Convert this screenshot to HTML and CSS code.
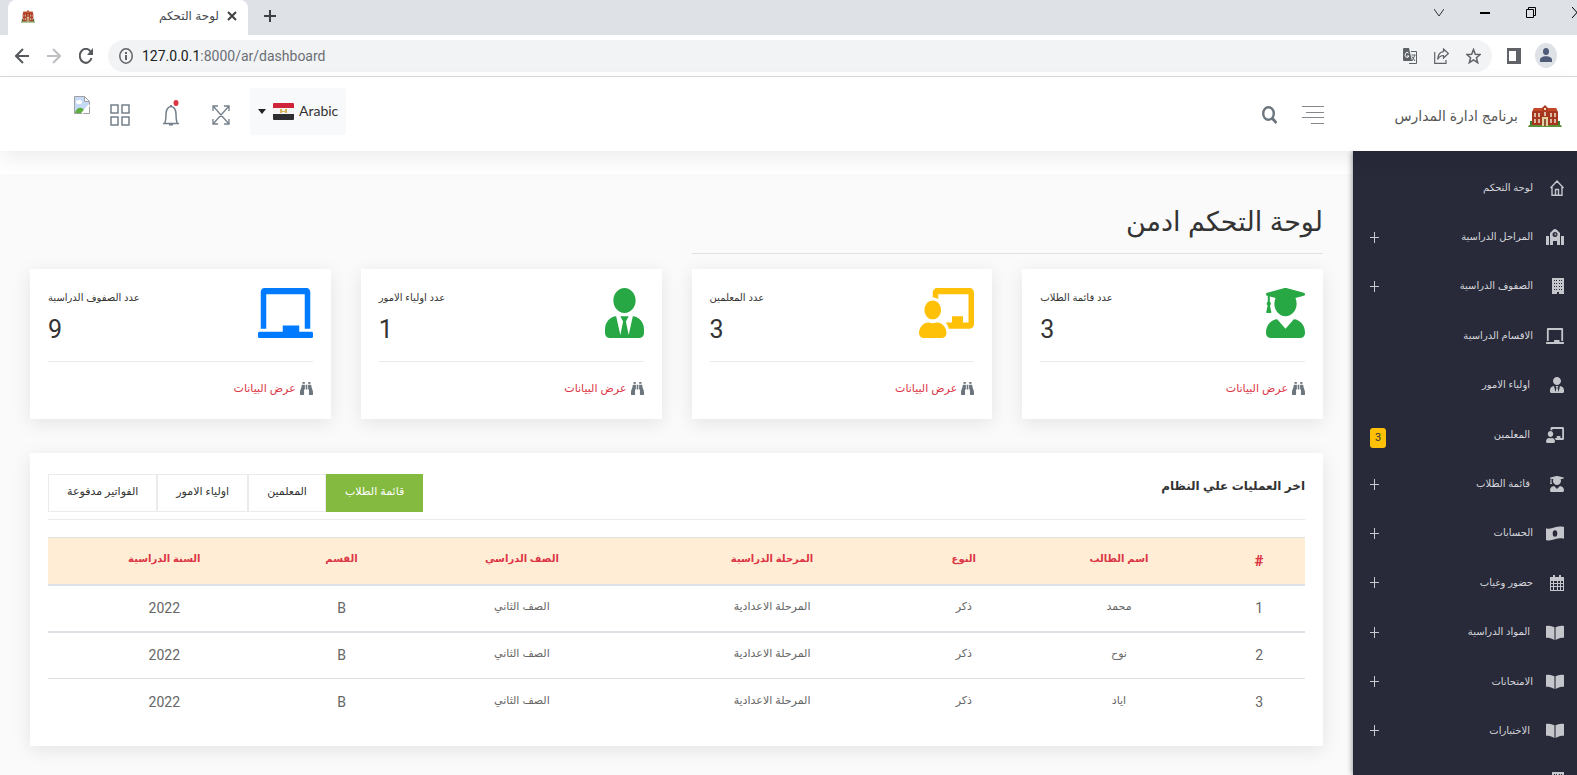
FILE: index.html
```html
<!DOCTYPE html>
<html lang="ar" dir="rtl">
<head>
<meta charset="utf-8">
<title>لوحة التحكم</title>
<link rel="stylesheet" href="styles.css">
</head>
<body>
<svg class="defs" aria-hidden="true">
  <symbol id="school" viewBox="0 0 34 23" preserveAspectRatio="none">
    <path d="M1 20h32l1 2H0z" fill="#5f8f3a"/>
    <path d="M2 16h3v4H2zM29 16h3v4h-3z" fill="#3f7d34"/>
    <path d="M4 7l2-4h8l3-3 3 3h8l2 4v13H4z" fill="#a5371f"/>
    <path d="M6 3h8v3H5zM20 3h8l1 3h-9z" fill="#c4472a"/>
    <path d="M14 4l3-3 3 3v3h-6z" fill="#b03a20"/>
    <path d="M16 3h2v2h-2z" fill="#f3e3c4"/>
    <path d="M6 8h2v4H6zM10 8h2v4h-2zM22 8h2v4h-2zM26 8h2v4h-2zM6 14h2v4H6zM10 14h2v4h-2zM22 14h2v4h-2zM26 14h2v4h-2zM16 7h2v4h-2z" fill="#dcb8a4"/>
    <path d="M14 12h6v9h-6z" fill="#e3cfa6"/>
    <path d="M16 14h2v7h-2z" fill="#8b5a35"/>
  </symbol>
  <symbol id="graduate" viewBox="0 0 448 512" preserveAspectRatio="none"><path fill="currentColor" d="M319.400 320.600L224 416l-95.400-95.400C57.100 323.700 0 382.200 0 454.400v9.600c0 26.500 21.500 48 48 48h352c26.500 0 48-21.500 48-48v-9.600c0-72.200-57.100-130.700-128.600-133.800zM13.600 79.800l6.400 1.500v58.400c-7 4.200-12 11.500-12 20.300 0 8.400 4.600 15.400 11.100 19.700L3.500 242c-1.700 6.900 2.100 14 7.600 14h41.800c5.500 0 9.300-7.100 7.600-14l-15.600-62.300C51.400 175.400 56 168.400 56 160c0-8.800-5-16.100-12-20.300V87.100l66 15.900c-8.600 17.200-14 36.400-14 57 0 70.700 57.300 128 128 128s128-57.300 128-128c0-20.600-5.300-39.800-14-57l96.300-23.200c18.200-4.400 18.200-27.100 0-31.500l-190.400-46c-13-3.100-26.700-3.100-39.700 0L13.600 48.200c-18.100 4.400-18.100 27.200 0 31.600z"/></symbol>
  <symbol id="tie" viewBox="0 0 448 512" preserveAspectRatio="none"><path fill="currentColor" d="M224 256c70.700 0 128-57.300 128-128S294.700 0 224 0 96 57.300 96 128s57.300 128 128 128zm95.800 32.600L272 480l-32-136 32-56h-96l32 56-32 136-47.800-191.400C56.900 292 0 350.300 0 422.400V464c0 26.500 21.500 48 48 48h352c26.500 0 48-21.500 48-48v-41.600c0-72.100-56.900-130.400-128.200-133.800z"/></symbol>
  <symbol id="teacher" viewBox="0 0 640 512" preserveAspectRatio="none"><path fill="currentColor" d="M208 352c-2.400 0-4.800.4-7.100 1.100C188 357.300 174.400 360 160 360s-27.900-2.700-40.900-6.900c-2.300-.7-4.700-1.100-7.100-1.100C49.900 352-.3 402.500 0 464.600.1 490.900 21.700 512 48 512h224c26.300 0 47.900-21.100 48-47.400.3-62.100-49.900-112.600-112-112.600zm-48-32c53 0 96-43 96-96s-43-96-96-96-96 43-96 96 43 96 96 96zM592 0H208c-26.500 0-48 22.300-48 49.600V96c23.400 0 45.100 6.800 64 17.800V64h352v288h-64v-64H384v64h-76.200c19.100 16.700 33.100 38.700 39.300 64H592c26.500 0 48-22.300 48-49.600V49.600C640 22.300 618.500 0 592 0z"/></symbol>
  <symbol id="board" viewBox="0 0 640 512" preserveAspectRatio="none"><path fill="currentColor" d="M96 64h448v352h64V40c0-22.100-17.900-40-40-40H72C49.900 0 32 17.900 32 40v376h64V64zm528 384H480v-64H288v64H16c-8.800 0-16 7.200-16 16v32c0 8.800 7.200 16 16 16h608c8.800 0 16-7.200 16-16v-32c0-8.800-7.200-16-16-16z"/></symbol>
  <symbol id="binoculars" viewBox="0 0 512 512" preserveAspectRatio="none"><path fill="currentColor" d="M416 48c0-8.800-7.200-16-16-16h-64c-8.800 0-16 7.200-16 16v48h96V48zM63.900 159.900C61.400 253.800 3.500 274.200 0 404v44c0 17.700 14.300 32 32 32h96c17.700 0 32-14.300 32-32V288h32V128H95.800c-17.600 0-31.500 14.300-31.900 31.900zm384.200 0c-.4-17.600-14.300-31.900-31.900-31.900H320v160h32v160c0 17.700 14.300 32 32 32h96c17.700 0 32-14.300 32-32v-44c-3.500-129.800-61.400-150.200-63.900-244.100zM176 32h-64c-8.800 0-16 7.200-16 16v48h96V48c0-8.800-7.200-16-16-16zm48 256h64V128h-64v160z"/></symbol>
  <symbol id="home" viewBox="0 0 14 16" preserveAspectRatio="none"><path fill="none" stroke="currentColor" stroke-width="1.400" d="M.5 8L7 1l6.500 7M2 6.500v8.800h10V6.500M5.500 15V9.500h3V15"/></symbol>
  <symbol id="building-school" viewBox="0 0 18 16" preserveAspectRatio="none"><path fill="currentColor" fill-rule="evenodd" d="M0 7h3v9H0zM15 7h3v9h-3zM4 4l3-3q2-2 4 0l3 3v12h-3v-4H7v4H4zM9 3a2.500 2.500 0 1 0 0 5 2.500 2.500 0 0 0 0-5zM8.700 4h.8v1.500h1v.7H8.700z"/></symbol>
  <symbol id="building" viewBox="0 0 12 16" preserveAspectRatio="none"><path fill="currentColor" fill-rule="evenodd" d="M0 0h12v16H7v-2H5v2H0zM2 2v1h1V2zM4 2v1h1V2zM7 2v1h1V2zM9 2v1h1V2zM2 5v1h1V5zM4 5v1h1V5zM7 5v1h1V5zM9 5v1h1V5zM2 8v1h1V8zM4 8v1h1V8zM7 8v1h1V8zM9 8v1h1V8zM2 11v1h1v-1zM4 11v1h1v-1zM7 11v1h1v-1zM9 11v1h1v-1z"/></symbol>
  <symbol id="money" viewBox="0 0 18 14" preserveAspectRatio="none"><path fill="currentColor" fill-rule="evenodd" d="M0 2c6 2 10-3 18-1v11c-7-2-12 3-18 1zM9 4a2.300 3 0 1 0 0 6 2.300 3 0 0 0 0-6z"/></symbol>
  <symbol id="calendar" viewBox="0 0 14 16" preserveAspectRatio="none"><path fill="currentColor" fill-rule="evenodd" d="M3 0h2v2h4V0h2v2h3v14H0V2h3zM1 6v2h2V6zM4 6v2h3V6zM8 6v2h2V6zM11 6v2h2V6zM1 9v2h2V9zM4 9v2h3V9zM8 9v2h2V9zM11 9v2h2V9zM1 12v3h2v-3zM4 12v3h3v-3zM8 12v3h2v-3zM11 12v3h2v-3z"/></symbol>
  <symbol id="book" viewBox="0 0 16 14" preserveAspectRatio="none"><path fill="currentColor" d="M0 1c3-1 5 0 7.500 1v12C5 12.500 3 12 0 12zM16 1c-3-1-5 0-7.500 1v12c2.500-1.500 4.500-2 7.500-2z"/></symbol>
</svg>

<div class="browser" dir="ltr">
  <div class="tabstrip">
    <div class="tab">
      <svg class="favicon"><use href="#school"/></svg>
      <span class="tab-title" dir="rtl">لوحة التحكم</span>
      <button class="chrome-btn" aria-label="Close tab"><svg width="10" height="10" viewBox="0 0 10 10"><path d="M1 1l8 8M9 1l-8 8" stroke="#3c4043" stroke-width="2"/></svg></button>
    </div>
    <button class="chrome-btn" aria-label="New tab"><svg width="14" height="14" viewBox="0 0 14 14"><path d="M7 1v12M1 7h12" stroke="#3c4043" stroke-width="2"/></svg></button>
    <div class="window-controls">
      <button class="chrome-btn" aria-label="Tab search"><svg width="10" height="8" viewBox="0 0 10 8"><path d="M0 0l5 7 5-7" fill="none" stroke="#333"/></svg></button>
      <button class="chrome-btn" aria-label="Minimize"><svg width="10" height="10" viewBox="0 0 10 10"><path d="M0 5h10" stroke="#000" stroke-width="2"/></svg></button>
      <button class="chrome-btn" aria-label="Restore"><svg width="10" height="11" viewBox="0 0 10 11"><path d="M.5 2.500h7v8h-7zM2.500 2V.5h7v8H8" fill="none" stroke="#000"/></svg></button>
      <button class="chrome-btn" aria-label="Close"><svg width="10" height="11" viewBox="0 0 10 11"><path d="M0 0l10 11M10 0L0 11" stroke="#000"/></svg></button>
    </div>
  </div>
  <div class="toolbar">
    <button class="chrome-btn" aria-label="Back"><svg width="14" height="16" viewBox="0 0 14 16"><path d="M14 8H1M8 1L1 8l7 7" fill="none" stroke="#55585c" stroke-width="2"/></svg></button>
    <button class="chrome-btn" aria-label="Forward"><svg width="14" height="16" viewBox="0 0 14 16"><path d="M0 8h13M6 1l7 7-7 7" fill="none" stroke="#bdbfc2" stroke-width="2"/></svg></button>
    <button class="chrome-btn" aria-label="Reload"><svg width="14" height="16" viewBox="0 0 14 16"><path d="M12.500 10A6 7 0 1 1 11.500 3.500" fill="none" stroke="#55585c" stroke-width="2"/><path d="M14 0v7H8z" fill="#55585c"/></svg></button>
    <div class="omnibox">
      <svg width="14" height="16" viewBox="0 0 14 16" preserveAspectRatio="none"><ellipse cx="7" cy="8" rx="6.200" ry="7.200" fill="none" stroke="#5f6368" stroke-width="1.500"/><path d="M7 7v5M7 4v2" stroke="#5f6368" stroke-width="2"/></svg>
      <span class="url"><b>127.0.0.1</b>:8000/ar/dashboard</span>
      <button class="chrome-btn" aria-label="Translate"><svg width="14" height="16" viewBox="0 0 14 16"><path d="M0 1a1 1 0 0 1 1-1h5l3 13H1a1 1 0 0 1-1-1z" fill="#5f6368"/><path d="M8 3.500h5.500v12H6" fill="none" stroke="#5f6368"/><path d="M5.500 5A2 2.500 0 1 0 6 8H4" fill="none" stroke="#fff"/><path d="M8.500 7h4M12 7l-3 6M9 8.500l3 4.500" stroke="#5f6368"/></svg></button>
      <button class="chrome-btn" aria-label="Share"><svg width="15" height="16" viewBox="0 0 15 16"><path d="M.7 4v11.300H12V12M9.500 1l4.800 4.500-4.800 4.500V7.500C6.500 7.500 5 9 3.700 11.500 4 7 6 4 9.500 3.700z" fill="none" stroke="#5f6368" stroke-width="1.200"/></svg></button>
      <button class="chrome-btn" aria-label="Bookmark"><svg width="15" height="16" viewBox="0 0 15 16"><path d="M7.500 1.500l1.800 4.700 4.900.3-3.800 3.200 1.300 5-4.200-2.800-4.200 2.800 1.300-5L.8 6.500l4.900-.3z" fill="none" stroke="#5f6368" stroke-width="1.500"/></svg></button>
    </div>
    <button class="chrome-btn" aria-label="Side panel"><svg width="14" height="16" viewBox="0 0 14 16"><path d="M0 0h14v16H0zM2 3v10h7V3z" fill="#5f6368" fill-rule="evenodd"/></svg></button>
    <button class="chrome-btn avatar" aria-label="Profile"><svg width="22" height="25" viewBox="0 0 22 25"><ellipse cx="11" cy="12.500" rx="11" ry="12.500" fill="#dee1e6"/><ellipse cx="11" cy="8.500" rx="3" ry="3.500" fill="#4f5b78"/><path d="M5 19v-2c0-5 12-5 12 0v2z" fill="#4f5b78"/></svg></button>
  </div>
</div>

<header class="header">
  <a class="brand" href="#"><svg class="brand-logo"><use href="#school"/></svg><span>برنامج ادارة المدارس</span></a>
  <button class="plain menu-toggle" aria-label="القائمة"><svg width="22" height="20" viewBox="0 0 22 20"><path d="M0 1.500h22M4 7.500h18M0 12.500h22M9 18.500h13" stroke="#84898e" stroke-width="1"/></svg></button>
  <button class="plain" aria-label="بحث"><svg width="15" height="18" viewBox="0 0 15 18" preserveAspectRatio="none"><ellipse cx="6.500" cy="7.500" rx="5.300" ry="6.300" fill="none" stroke="#6c757d" stroke-width="2.400"/><path d="M10 12l4.500 5" stroke="#6c757d" stroke-width="2.800"/></svg></button>
  <div class="tools">
    <button class="language"><span>Arabic</span><svg width="21" height="17" viewBox="0 0 21 17"><rect width="21" height="17" rx="1" fill="#f4f4f4"/><path d="M0 5V1q0-1 1-1h19q1 0 1 1v4z" fill="#ce2338"/><path d="M0 11h21v5q0 1-1 1H1q-1 0-1-1z" fill="#2e2e30"/><path d="M7 6h2v4H7zM12 6h2v4h-2zM9 8h3v1H9z" fill="#d7b25a"/></svg><i class="caret"></i></button>
    <button class="plain" aria-label="ملء الشاشة"><svg width="18" height="20" viewBox="0 0 18 20"><path d="M1 1l16 18M17 1L1 19M1 6V1h5M12 1h5v5M17 14v5h-5M6 19H1v-5" fill="none" stroke="#75808a" stroke-width="1.300"/></svg></button>
    <button class="plain bell" aria-label="الإشعارات"><svg width="18" height="26" viewBox="0 0 18 26"><path d="M1 23.500h16M3 23c1-3 1-6 1-9 0-4 2-7.500 5-7.500s5 3.500 5 7.500c0 3 0 6 1 9" fill="none" stroke="#75808a" stroke-width="1.500"/><path d="M7 24h4v1.500H7zM8 5h2v2H8z" fill="#75808a"/><ellipse cx="14" cy="3" rx="2.500" ry="3" fill="#dc3545"/></svg></button>
    <button class="plain" aria-label="التطبيقات"><svg width="20" height="22" viewBox="0 0 20 22"><path d="M1 1h7v8H1zM12 1h7v8h-7zM1 13h7v8H1zM12 13h7v8h-7z" fill="none" stroke="#75808a" stroke-width="1.500"/></svg></button>
    <a class="user" href="#" aria-label="الملف الشخصي"><svg width="16" height="18" viewBox="0 0 16 18"><path d="M.5.5h10l5 5v12H.5z" fill="#c6d9f7" stroke="#a0a0a0"/><ellipse cx="5" cy="6" rx="3" ry="2" fill="#fff"/><path d="M1 17c1-5 6-7 9-3v3z" fill="#5cae3d"/><path d="M9 17l6-7v7z" fill="#fff"/><path d="M8 17.500L15.500 9" stroke="#fff" stroke-width="2"/><path d="M10.500.5v5h5z" fill="#fff" stroke="#a0a0a0"/></svg></a>
  </div>
</header>

<div class="layout">
  <nav class="sidebar">
    <ul class="menu">
      <li><a href="#"><svg class="narrow"><use href="#home"/></svg><span>لوحة التحكم</span></a></li>
      <li><a href="#"><svg><use href="#building-school"/></svg><span>المراحل الدراسية</span><i class="plus"></i></a></li>
      <li><a href="#"><svg class="slim"><use href="#building"/></svg><span>الصفوف الدراسية</span><i class="plus"></i></a></li>
      <li><a href="#"><svg><use href="#board"/></svg><span>الاقسام الدراسية</span></a></li>
      <li><a href="#"><svg class="narrow"><use href="#tie"/></svg><span class="inset">اولياء الامور</span></a></li>
      <li><a href="#"><svg><use href="#teacher"/></svg><span class="inset">المعلمين</span><b class="badge">3</b></a></li>
      <li><a href="#"><svg class="narrow"><use href="#graduate"/></svg><span class="inset">قائمة الطلاب</span><i class="plus"></i></a></li>
      <li><a href="#"><svg class="low"><use href="#money"/></svg><span>الحسابات</span><i class="plus"></i></a></li>
      <li><a href="#"><svg class="narrow"><use href="#calendar"/></svg><span>حضور وغياب</span><i class="plus"></i></a></li>
      <li><a href="#"><svg class="low"><use href="#book"/></svg><span class="inset">المواد الدراسية</span><i class="plus"></i></a></li>
      <li><a href="#"><svg class="low"><use href="#book"/></svg><span>الامتحانات</span><i class="plus"></i></a></li>
      <li><a href="#"><svg class="low"><use href="#book"/></svg><span class="inset">الاختبارات</span><i class="plus"></i></a></li>
      <li><a href="#"><svg class="slim"><use href="#building"/></svg></a></li>
    </ul>
  </nav>
  <main class="content">
    <div class="page">
      <h1>لوحة التحكم ادمن</h1>
      <section class="cards">
        <article class="card">
          <div class="stat"><svg class="green tall"><use href="#graduate"/></svg><div dir="ltr"><p>عدد قائمة الطلاب</p><strong>3</strong></div></div>
          <div class="more"><svg><use href="#binoculars"/></svg><a href="#">عرض البيانات</a></div>
        </article>
        <article class="card">
          <div class="stat"><svg class="yellow"><use href="#teacher"/></svg><div dir="ltr"><p>عدد المعلمين</p><strong>3</strong></div></div>
          <div class="more"><svg><use href="#binoculars"/></svg><a href="#">عرض البيانات</a></div>
        </article>
        <article class="card">
          <div class="stat"><svg class="green tall"><use href="#tie"/></svg><div dir="ltr"><p>عدد اولياء الامور</p><strong>1</strong></div></div>
          <div class="more"><svg><use href="#binoculars"/></svg><a href="#">عرض البيانات</a></div>
        </article>
        <article class="card">
          <div class="stat"><svg class="blue"><use href="#board"/></svg><div dir="ltr"><p>عدد الصفوف الدراسية</p><strong>9</strong></div></div>
          <div class="more"><svg><use href="#binoculars"/></svg><a href="#">عرض البيانات</a></div>
        </article>
      </section>
      <section class="panel">
        <div class="panel-head">
          <h2>اخر العمليات علي النظام</h2>
          <div class="tabs" role="tablist">
            <button role="tab" class="active" aria-selected="true">قائمة الطلاب</button>
            <button role="tab">المعلمين</button>
            <button role="tab">اولياء الامور</button>
            <button role="tab">الفواتير مدفوعة</button>
          </div>
        </div>
        <table>
          <colgroup><col class="c1"><col class="c2"><col class="c3"><col class="c4"><col class="c5"><col class="c6"><col class="c7"></colgroup>
          <thead><tr><th class="hash">#</th><th>اسم الطالب</th><th>النوع</th><th>المرحلة الدراسية</th><th>الصف الدراسي</th><th>القسم</th><th>السنة الدراسية</th></tr></thead>
          <tbody>
            <tr><td class="num">1</td><td>محمد</td><td>ذكر</td><td>المرحلة الاعدادية</td><td>الصف الثاني</td><td class="num">B</td><td class="num">2022</td></tr>
            <tr><td class="num">2</td><td>نوح</td><td>ذكر</td><td>المرحلة الاعدادية</td><td>الصف الثاني</td><td class="num">B</td><td class="num">2022</td></tr>
            <tr><td class="num">3</td><td>اياد</td><td>ذكر</td><td>المرحلة الاعدادية</td><td>الصف الثاني</td><td class="num">B</td><td class="num">2022</td></tr>
          </tbody>
        </table>
      </section>
    </div>
  </main>
</div>
</body>
</html>
```

FILE: styles.css
```css
* { box-sizing: border-box; }
body {
  margin: 0;
  height: 100vh;
  display: flex;
  flex-direction: column;
  overflow: hidden;
  background: #fff;
  color: #333;
  font: 12px/20px "Liberation Sans", "DejaVu Sans", sans-serif;
}
button { font: inherit; color: inherit; border: 0; background: none; padding: 0; margin: 0; }
a { color: inherit; text-decoration: none; }
p, h1, h2, ul { margin: 0; padding: 0; }
svg { display: block; flex: none; }
.defs { position: absolute; width: 0; height: 0; }

/* browser window */
.tabstrip { display: flex; align-items: center; height: 35px; background: #dee1e6; padding-left: 8px; gap: 15px; }
.tab { display: flex; align-items: center; align-self: stretch; width: 240px; padding: 0 11px 3px 13px; gap: 8px; background: #fff; border-radius: 8px 8px 0 0; }
.favicon { width: 14px; height: 13px; }
.tab-title { flex: 1; text-align: start; font-size: 12px; color: #45494d; }
.tabstrip > .chrome-btn { padding-bottom: 3px; }
.window-controls { display: flex; align-items: center; gap: 36px; margin-left: auto; margin-right: -5px; padding-bottom: 10px; }
.toolbar { display: flex; align-items: center; height: 42px; padding: 0 20px 0 15px; gap: 18px; border-bottom: 1px solid #d7d9dc; }
.omnibox { flex: 1; display: flex; align-items: center; gap: 17px; height: 32px; margin: 0 -3px; padding: 0 11px; border-radius: 16px; background: #f1f3f4; }
.url { flex: 1; margin-left: -8px; font: 14px/20px Roboto, sans-serif; color: #6b6f74; }
.url b { font-weight: 400; color: #202124; }
.avatar { margin-left: -4px; }

/* page header */
.header { position: relative; z-index: 2; display: flex; align-items: center; height: 74px; flex: none; padding: 2px 15px 0 74px; box-shadow: 0 8px 20px rgba(0, 0, 0, .07); background: #fff; }
.brand { display: flex; align-items: center; gap: 10px; width: 237px; padding-top: 2px; font-size: 14px; color: #555; }
.brand-logo { width: 34px; height: 23px; }
.menu-toggle { margin-left: 25px; margin-right: 1px; }
.tools { display: flex; align-items: center; gap: 32px; margin-right: auto; }
.language { display: flex; align-items: center; gap: 5px; height: 47px; padding: 0 8px; margin: 0 0 8px -12px; border-radius: 3px; background: #f8f9fa; color: #333; font: 14px/20px Lato, sans-serif; }
.caret { margin-right: 2px; border: 4px solid transparent; border-top: 5px solid #212529; border-bottom: 0; }
.bell { margin-bottom: 4px; }
.user { margin: 0 -12px 20px 0; }

/* layout */
.layout { flex: 1; min-height: 0; display: flex; }
.sidebar { position: relative; z-index: 1; width: 224px; flex: none; display: flex; flex-direction: column; background: #282a3a; color: #d6d7db; box-shadow: 0 0 6px rgba(0, 0, 0, .5); }
.menu { flex: 1; display: flex; flex-direction: column; margin: 12px 0 -30px; list-style: none; }
.menu li { flex: 1; display: flex; }
.menu a { flex: 1; display: flex; align-items: center; padding: 0 13px 0 17px; font-size: 10px; }
.menu svg { width: 18px; height: 16px; color: #c5c6cb; }
.menu .narrow { width: 14px; margin-left: 4px; }
.menu .slim { width: 12px; margin-left: 6px; }
.menu .low { height: 15px; }
.menu span { flex: 1; padding-right: 13px; }
.menu .inset { padding-right: 16px; }
.plus { width: 9px; height: 11px; background: linear-gradient(#c9cad0, #c9cad0) center / 1px 100% no-repeat, linear-gradient(#c9cad0, #c9cad0) center / 100% 1px no-repeat; }
.badge { width: 16px; height: 20px; margin-top: 6px; border-radius: 3px; background: #ffc107; color: #333; font: 11px/20px Roboto, sans-serif; text-align: center; }

.content { flex: 1; min-width: 0; padding-top: 23px; }
.page { height: 100%; padding: 16px 30px; background: #fafafa; }
h1 { width: calc(50% - 15px); height: 64px; margin-bottom: 15px; border-bottom: 1px solid #dee0e2; font-size: 27px; line-height: 64px; font-weight: 400; }
.cards { display: grid; grid-template-columns: repeat(4, 1fr); gap: 30px; margin-bottom: 34px; }
.card, .panel { background: #fff; box-shadow: 0 4px 18px rgba(0, 0, 0, .09); }
.card { height: 150px; padding: 19px 18px; }
.stat { display: flex; justify-content: space-between; height: 74px; border-bottom: 1px solid #e9ebed; }
.stat svg { width: 55px; height: 50px; }
.stat .tall { width: 39px; }
.stat p { font-size: 10px; }
.stat strong { display: block; font: 400 25px/44px Roboto, sans-serif; }
.green { color: #28a745; }
.yellow { color: #ffc107; }
.blue { color: #007bff; }
.more { display: flex; align-items: center; gap: 4px; height: 52px; color: #dc3545; font-size: 11px; }
.more svg { width: 13px; height: 15px; color: #6c757d; }

.panel { padding: 21px 18px 20px; }
.panel-head { display: flex; justify-content: space-between; height: 46px; margin-bottom: 17px; border-bottom: 1px solid #e9ebed; }
h2 { font-size: 12px; line-height: 24px; }
.tabs { display: flex; height: 38px; }
.tabs button { border: 1px solid #e9ebed; padding: 0 18px 4px; font-size: 11px; }
.tabs .active { border-color: #84ba3f; background: #84ba3f; color: #fff; }
table { width: 100%; table-layout: fixed; border-collapse: collapse; text-align: center; color: #666; font-size: 11px; }
.c1 { width: 7.3%; } .c2 { width: 15%; } .c3 { width: 9.7%; } .c4 { width: 20.8%; } .c5 { width: 19%; } .c6 { width: 9.7%; } .c7 { width: 18.5%; }
th, td { height: 47px; padding: 0 0 4px; border-top: 1px solid #dee2e6; }
th { background: #ffeed5; color: #dc3545; border-bottom: 2px solid #dee2e6; font-size: 10px; }
tbody tr:first-child td { border-bottom: 2px solid #dee2e6; }
.num { padding: 0; font: 14px/20px Roboto, sans-serif; }
.hash { padding: 0; font: 900 15px/20px Roboto, sans-serif; }
```
